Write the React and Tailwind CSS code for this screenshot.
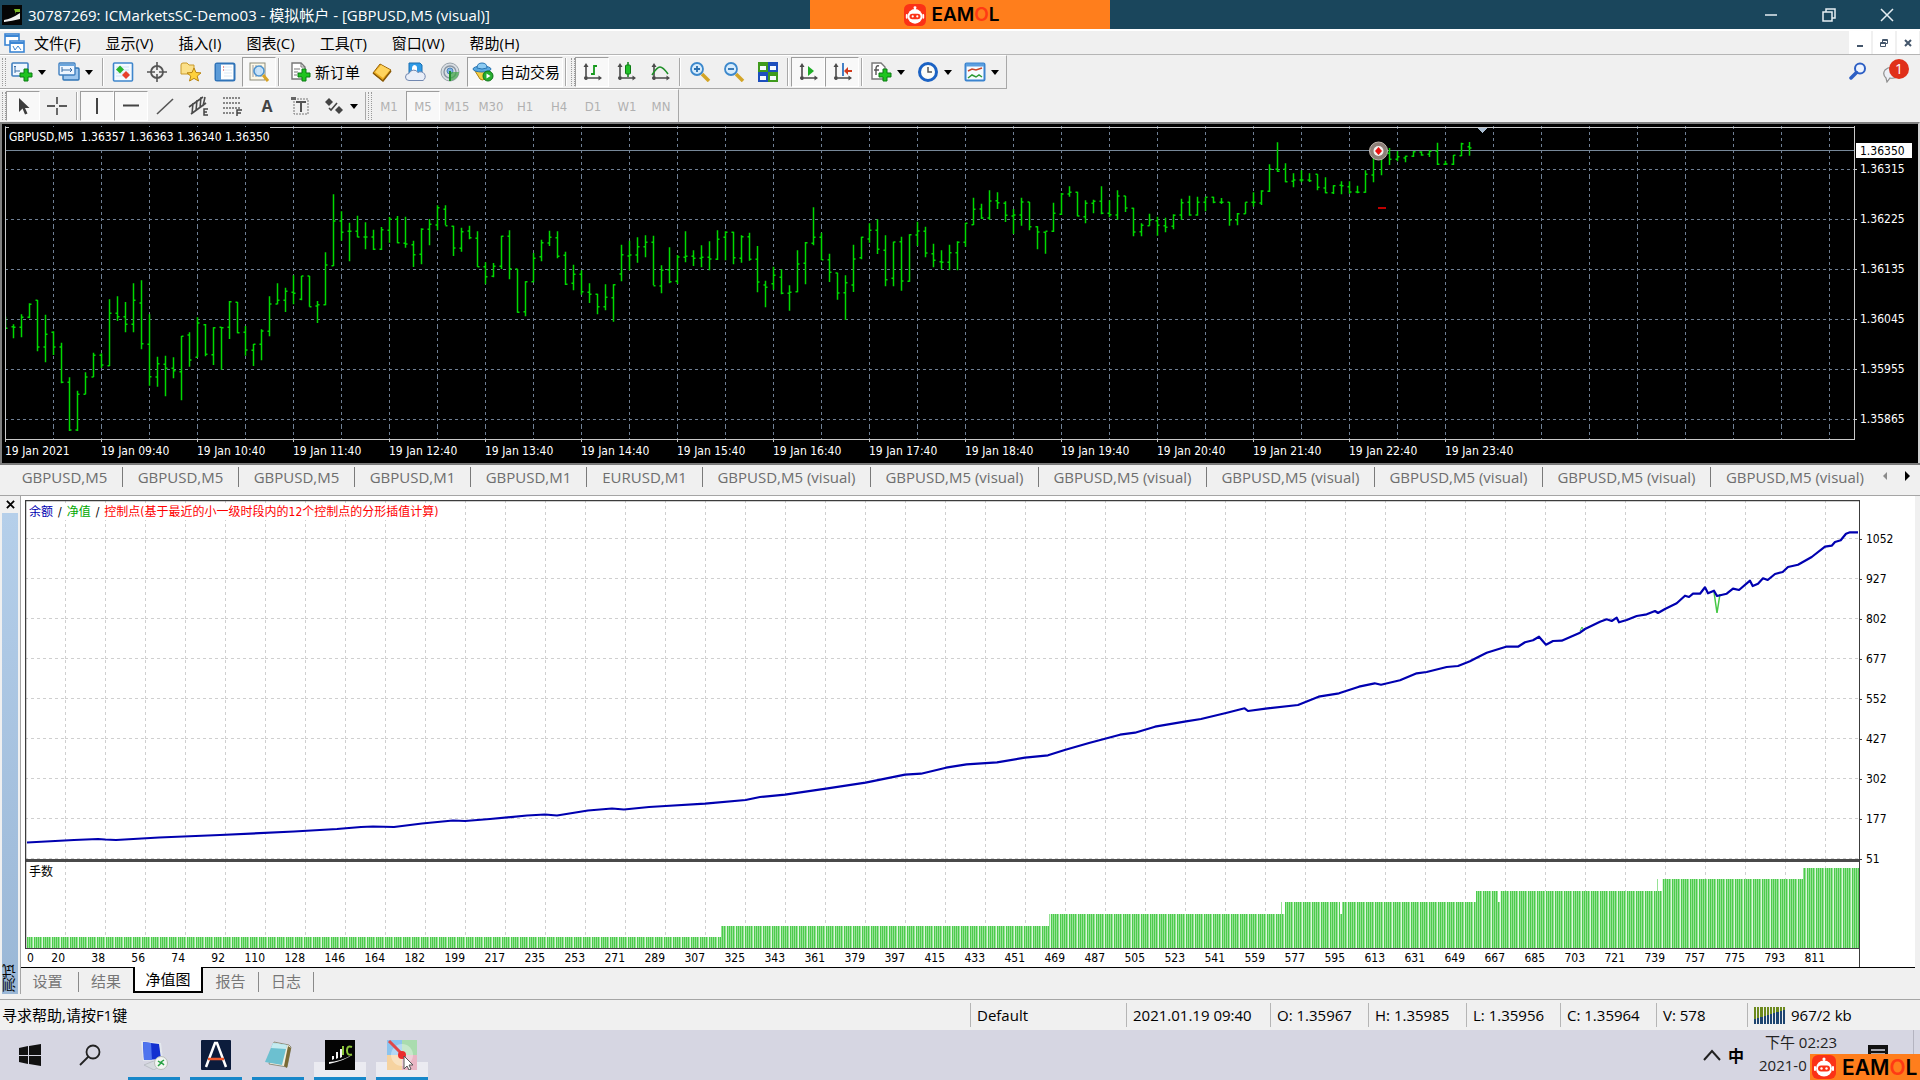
import clsx from 'clsx';

// [high, low, open, close] measured downwards in thirds of a pixel
const bars = [
  [590, 627, 605, 625], [613, 655, 620, 622], [583, 652, 622, 592], [550, 595, 592, 553], [540, 694, 541, 681],
  [584, 727, 681, 643], [634, 705, 637, 681], [668, 790, 681, 787], [772, 933, 787, 930], [812, 933, 930, 823],
  [757, 823, 823, 771], [698, 771, 771, 706], [700, 744, 706, 735], [538, 738, 737, 580], [529, 603, 580, 590],
  [546, 637, 590, 613], [490, 637, 613, 541], [481, 688, 549, 671], [583, 797, 673, 770], [710, 800, 771, 731],
  [707, 829, 733, 745], [712, 775, 745, 752], [648, 841, 755, 649], [637, 740, 645, 720], [592, 712, 712, 609],
  [612, 709, 614, 703], [622, 735, 704, 623], [622, 749, 622, 623], [543, 657, 622, 545], [546, 640, 547, 638],
  [618, 707, 637, 690], [672, 738, 691, 673], [628, 721, 673, 633], [529, 649, 634, 552], [490, 553, 552, 541],
  [503, 576, 541, 514], [466, 553, 517, 520], [468, 541, 538, 468], [468, 560, 468, 560], [543, 609, 558, 554],
  [397, 556, 554, 435], [223, 438, 437, 303], [274, 362, 303, 337], [308, 424, 334, 334], [287, 352, 334, 351],
  [307, 388, 351, 351], [329, 390, 351, 388], [321, 390, 388, 329], [291, 368, 331, 298], [288, 370, 298, 368],
  [290, 383, 370, 372], [362, 441, 374, 404], [325, 433, 403, 328], [297, 376, 328, 313], [256, 331, 315, 263],
  [256, 316, 268, 317], [317, 408, 319, 384], [323, 395, 385, 335], [317, 358, 333, 353], [334, 440, 355, 440],
  [427, 493, 440, 470], [429, 472, 469, 439], [347, 447, 439, 349], [331, 478, 349, 446], [447, 578, 447, 577],
  [484, 589, 575, 485], [399, 487, 485, 415], [359, 424, 410, 368], [332, 378, 369, 352], [334, 415, 353, 409],
  [395, 495, 406, 493], [434, 511, 490, 463], [451, 524, 463, 515], [490, 549, 517, 523], [521, 583, 523, 560],
  [493, 571, 560, 532], [493, 605, 533, 494], [374, 484, 462, 404], [362, 451, 408, 405], [352, 428, 405, 380],
  [346, 412, 380, 367], [347, 496, 367, 497], [436, 520, 498, 451], [382, 490, 449, 485], [405, 492, 484, 411],
  [334, 427, 412, 409], [391, 438, 409, 415], [376, 442, 415, 412], [364, 451, 412, 417], [331, 420, 418, 358],
  [334, 421, 352, 337], [335, 433, 337, 413], [346, 428, 415, 350], [338, 422, 350, 418], [378, 517, 418, 486],
  [482, 562, 495, 502], [440, 509, 491, 466], [448, 523, 472, 520], [496, 572, 520, 517], [391, 517, 515, 432],
  [366, 493, 430, 368], [262, 376, 370, 352], [338, 420, 352, 419], [401, 486, 419, 457], [458, 539, 459, 519],
  [466, 600, 518, 488], [374, 516, 495, 417], [350, 418, 413, 352], [310, 368, 357, 331], [298, 402, 331, 388],
  [346, 499, 391, 479], [365, 499, 475, 366], [350, 512, 365, 483], [343, 485, 484, 344], [305, 378, 345, 333],
  [320, 412, 334, 399], [371, 442, 401, 421], [391, 448, 425, 427], [374, 451, 427, 398], [364, 451, 398, 367],
  [308, 380, 367, 310], [233, 315, 314, 268], [251, 297, 267, 294], [211, 299, 294, 243], [217, 267, 242, 248],
  [244, 306, 250, 286], [267, 342, 288, 285], [233, 317, 285, 246], [246, 331, 246, 320], [319, 388, 320, 336],
  [335, 401, 337, 334], [248, 336, 334, 280], [219, 285, 283, 222], [199, 230, 222, 217], [215, 289, 217, 288],
  [241, 310, 290, 250], [239, 280, 250, 244], [199, 283, 244, 280], [241, 292, 280, 284], [211, 299, 285, 228],
  [228, 276, 228, 264], [263, 349, 265, 336], [310, 349, 335, 316], [281, 317, 317, 300], [290, 347, 302, 316],
  [293, 337, 317, 322], [283, 328, 319, 286], [236, 299, 285, 248], [227, 287, 247, 285], [230, 287, 285, 247],
  [232, 274, 247, 232], [230, 250, 232, 247], [234, 252, 247, 247], [246, 317, 247, 300], [279, 316, 300, 281],
  [247, 281, 281, 247], [217, 260, 247, 247], [211, 255, 249, 213], [133, 216, 214, 148], [67, 156, 148, 154],
  [130, 187, 148, 185], [160, 202, 184, 180], [151, 187, 180, 180], [160, 186, 180, 182], [163, 211, 163, 202],
  [172, 220, 204, 218], [196, 222, 218, 197], [184, 223, 196, 197], [184, 221, 200, 216], [197, 220, 216, 217],
  [151, 218, 217, 163], [95, 187, 165, 100], [92, 166, 100, 112], [84, 135, 100, 118], [93, 124, 118, 110],
  [107, 127, 114, 109], [94, 111, 109, 95], [94, 107, 96, 105], [91, 111, 103, 94], [68, 135, 94, 133],
  [122, 135, 133, 132], [105, 135, 133, 106], [68, 108, 107, 71], [66, 107, 80, 84],
];

const barPath = bars
  .map(([high, low, open, close], i) => {
    const x = 0.5 + i * 8;
    const y = (v) => (v / 3 - 6).toFixed(1);
    return `M${x} ${y(high)}V${y(low)}M${x - 2} ${y(open)}h2M${x} ${y(close)}h2`;
  })
  .join('');

const equityLine =
  '2,342.5 49,340 73,339 80,339.5 91,340 134,337.5 195,335 269,331.5 312,329 336,327 348,326.5 369,327 397,323.5 428,320.5 440,321 465,319 502,315.5 520,314.5 532,315.5 563,310.5 587,308.5 599,309.5 624,307 ' +
  '640.5,306 680,303.7 720.6,300 735,297 760,294.7 801,288.7 840.5,282.7 880,274.7 896,273.7 921,267.7 941.5,264.3 972,262.3 1000,257.7 1023,255.3 1040.5,249.7 1064,243 1095,234.7 1110,232.7 1130,226.7 1161,221.3 1176,219 1202,212.7 1219.6,208.3 1223,211 1242.5,208.3 1273,205 1293.6,196.7 1314,193.3 1334,186.7 1349.7,183.3 1356,184.7 1375,180.3 1391.7,173.3 1401.7,172 1421.7,167 1433,166 1445,161.3 1451.7,157.7 1461.7,152.7 1481,146.7 1493,146.7 1500,142.3 1508,140.3 1514,136.7 1521,144.7 1528,141 1536.7,140.7 1555,132.7 1560,129 1575,121.7 1581.7,119.3 1586.7,121 1591.7,117.7 1594,122.3 1601.7,120 1611.7,116 1621.7,114.3 1630,111 1633,113 1640,109 1651.7,103.3 1660,95.7 1664,97 1668,93.7 1675,93.7 1680,87.3 1683,93.3 1689,90.7 1692,96 1701.7,93.7 1708,88.7 1714,90 1725,80.7 1727.7,86 1733,83.7 1738,78.3 1742.7,80 1750,74 1757.7,72 1763,67 1773,64.7 1786.7,57 1800,46.7 1806.7,45.7 1810,42 1815.7,40.3 1821,33.7 1825,32.3 1833,32.3';

// [left, right, top] of each run of equal lot sizes
const lots = [
  [2, 696, 437], [696, 1024, 426], [1024, 1256, 414], [1256, 1257, 402], [1257, 1260, 414], [1260, 1315, 402],
  [1315, 1317, 414], [1317, 1451, 402], [1451, 1473, 391], [1473, 1475, 402], [1475, 1632, 391], [1632, 1633, 379],
  [1633, 1637, 391], [1637, 1778, 379], [1778, 1834, 368],
];

const prices = ['1.36315', '1.36225', '1.36135', '1.36045', '1.35955', '1.35865'];
const times = ['19 Jan 2021', ...['09', '10', '11', '12', '13', '14', '15', '16', '17', '18', '19', '20', '21', '22', '23'].map((h) => `19 Jan ${h}:40`)];
const balances = [1052, 927, 802, 677, 552, 427, 302, 177, 51];
const trades = [
  20, 38, 56, 74, 92, 110, 128, 146, 164, 182, 199, 217, 235, 253, 271, 289, 307, 325, 343, 361, 379, 397, 415, 433,
  451, 469, 487, 505, 523, 541, 559, 577, 595, 613, 631, 649, 667, 685, 703, 721, 739, 757, 775, 793, 811,
];
const chartTabs = [
  'GBPUSD,M5', 'GBPUSD,M5', 'GBPUSD,M5', 'GBPUSD,M1', 'GBPUSD,M1', 'EURUSD,M1',
  ...Array(7).fill('GBPUSD,M5 (visual)'),
];
const menus = ['文件(F)', '显示(V)', '插入(I)', '图表(C)', '工具(T)', '窗口(W)', '帮助(H)'];
const periods = ['M1', 'M5', 'M15', 'M30', 'H1', 'H4', 'D1', 'W1', 'MN'];

function Icon({ children }) {
  return (
    <svg viewBox="0 0 22 20" className="block h-5 w-[22px] shrink-0" fill="none" aria-hidden="true">
      {children}
    </svg>
  );
}

const axes = (
  <>
    <path d="M5 3v15M3 16h16" stroke="#4a4a4a" strokeWidth="1.600" />
    <path d="M2.500 5L5 1l2.500 4zM17.500 13.500l3.500 2.500-3.500 2.500zM3.500 14.500h3v3h-3z" fill="#4a4a4a" />
  </>
);
const plus = <path d="M13 7h4v4h4v4h-4v4h-4v-4H9v-4h4z" fill="#1fc41f" stroke="#0b7a12" />;

const icons = {
  newChart: (
    <Icon>
      <rect x="1" y="1" width="16" height="13" rx="1" fill="#eef6ff" stroke="#3f7fbf" strokeWidth="1.600" />
      <path d="M4 4v7M4 9h5M3 5l1-1 1 1" stroke="#3a6ea5" />
      {plus}
    </Icon>
  ),
  profiles: (
    <Icon>
      <rect x="5" y="6" width="16" height="12" rx="1" fill="#9cc6ee" stroke="#2f74b5" strokeWidth="1.400" />
      <rect x="1" y="1" width="16" height="12" rx="1" fill="#eef6ff" stroke="#3f7fbf" strokeWidth="1.400" />
      <path d="M1 3h16" stroke="#6aa5dc" strokeWidth="2" />
      <path d="M4 5v5M4 8h10M12 6l2 2-2 2" stroke="#3a6ea5" />
    </Icon>
  ),
  market: (
    <Icon>
      <rect x="1.500" y="1" width="19" height="18" rx="1" fill="#f4faff" stroke="#3f86cc" strokeWidth="1.600" />
      <path d="M4 5h13M4 8h13M4 11h13M4 14h13" stroke="#cfe2f5" />
      <path d="M8 3.500l4 4-4 4-4-4z" fill="#28b52c" />
      <path d="M14 9l4 4-4 4-4-4z" fill="#e8402a" />
    </Icon>
  ),
  target: (
    <Icon>
      <circle cx="11" cy="10" r="6" stroke="#555" strokeWidth="1.800" />
      <path d="M11 0v8M11 12v8M1 10h8M13 10h8" stroke="#555" strokeWidth="1.600" />
    </Icon>
  ),
  favorites: (
    <Icon>
      <path d="M1 3q0-2 2-2h4l2 2h5v9H1z" fill="#fbe08a" stroke="#c99a2c" />
      <path d="M14 6l2 4.500 5 .4-3.800 3.200L18.500 19 14 16.400 9.500 19l1.300-4.900L7 10.900l5-.4z" fill="#ffd23c" stroke="#b98511" />
    </Icon>
  ),
  navigator: (
    <Icon>
      <rect x="1.500" y="1.500" width="19" height="17" rx="1.500" fill="#fff" stroke="#2f73b8" strokeWidth="2" />
      <path d="M2 2h5v16H2z" fill="#5b9bd8" />
      <path d="M9 5h1M9 8h1" stroke="#d33" />
      <path d="M10 5h8M10 8h8M10 11h8M10 14h8" stroke="#dce9f5" />
    </Icon>
  ),
  tester: (
    <Icon>
      <rect x="2" y="1" width="15" height="17" fill="#fdf8e6" stroke="#8b8b7a" />
      <path d="M5 3v12M8 3v12M13 3v12" stroke="#bbb" strokeWidth="1.500" />
      <circle cx="11" cy="9" r="5" fill="#bfe0fb" fillOpacity=".85" stroke="#4b92cf" strokeWidth="1.600" />
      <path d="M15 13l5 6" stroke="#d7a326" strokeWidth="3" />
    </Icon>
  ),
  newOrder: (
    <Icon>
      <path d="M3 1h9l4 4v12H3z" fill="#fff" stroke="#777" strokeWidth="1.400" />
      <path d="M12 1v4h4M5 7h6M5 10h4M5 13h3" stroke="#777" />
      {plus}
    </Icon>
  ),
  book: (
    <Icon>
      <path d="M2 11L9 2l11 6-8 11z" fill="#e9a91e" stroke="#9a6508" />
      <path d="M4 10l6-7 9 5-7 8z" fill="#ffd45e" />
      <path d="M2 11l10 8 8-10" stroke="#8a5a06" strokeWidth="1.500" />
    </Icon>
  ),
  cloud: (
    <Icon>
      <path d="M4 1h11l2 2v8H4z" fill="#2f9be6" stroke="#1b6fb0" />
      <path d="M9 3a3 3 0 0 1 3 3v3H7V6q0-2 2-3z" fill="#fff" />
      <path d="M4 18.500a3.500 3.500 0 0 1 0-7 5 5 0 0 1 9-1 4 4 0 0 1 5 8z" fill="#e9eef8" stroke="#7288b0" />
    </Icon>
  ),
  signal: (
    <Icon>
      <circle cx="11" cy="10" r="9" fill="#d8dde2" stroke="#9aa3ab" />
      <circle cx="11" cy="10" r="6" stroke="#8a96a3" strokeWidth="1.400" />
      <circle cx="11" cy="9" r="3" fill="#7fb3e4" stroke="#4c83b8" />
      <path d="M11 10v9q8-1 9-9z" fill="#3fa545" fillOpacity=".7" />
      <path d="M11 9v10" stroke="#1f8f2a" strokeWidth="2" />
    </Icon>
  ),
  auto: (
    <Icon>
      <path d="M3 9h14l-4 8q-3 2-5 0z" fill="#f6cf45" stroke="#ad8110" />
      <ellipse cx="10" cy="7" rx="9" ry="3" fill="#5aa9e0" stroke="#2a76b3" />
      <path d="M5 6q0-5 5-5t5 5q-5 2-10 0z" fill="#8ccbf2" stroke="#2a76b3" />
      <circle cx="16" cy="14" r="5" fill="#27ad2f" stroke="#0e7416" />
      <path d="M14.500 11.500v5l4-2.500z" fill="#fff" />
    </Icon>
  ),
  barChart: <Icon>{axes}<path d="M13 3v10M10 12h3M13 4h3" stroke="#169a1d" strokeWidth="1.800" /></Icon>,
  candles: (
    <Icon>
      {axes}
      <path d="M13 0v15" stroke="#0d7c14" strokeWidth="1.500" />
      <rect x="10.500" y="3" width="5" height="9" rx="1" fill="#22c02a" stroke="#0d7c14" />
    </Icon>
  ),
  lineChart: <Icon>{axes}<path d="M3 13q5-8 8-8t8 7" stroke="#1f9028" strokeWidth="1.600" /></Icon>,
  zoomIn: (
    <Icon>
      <path d="M13 12l7 7" stroke="#d3a528" strokeWidth="3.500" />
      <circle cx="8" cy="7" r="6" fill="#d7ecfc" stroke="#3c88cc" strokeWidth="1.800" />
      <path d="M8 4v6M5 7h6" stroke="#2a6fb0" strokeWidth="1.800" />
    </Icon>
  ),
  zoomOut: (
    <Icon>
      <path d="M13 12l7 7" stroke="#d3a528" strokeWidth="3.500" />
      <circle cx="8" cy="7" r="6" fill="#d7ecfc" stroke="#3c88cc" strokeWidth="1.800" />
      <path d="M5 7h6" stroke="#2a6fb0" strokeWidth="1.800" />
    </Icon>
  ),
  tile: (
    <Icon>
      <path d="M1 0h10v10H1zM11 10h10v10H11z" fill="#3f9a1c" />
      <path d="M11 0h10v10H11zM1 10h10v10H1z" fill="#1d4fbd" />
      <path d="M3 4h6v4H3zM13 4h6v4h-6zM3 14h6v4H3zM13 14h6v4h-6z" fill="#f4faff" />
    </Icon>
  ),
  scroll: <Icon>{axes}<path d="M11 4v10l6-5z" fill="#1fae27" /></Icon>,
  shift: (
    <Icon>
      {axes}
      <path d="M12 1v13" stroke="#2f73c0" strokeWidth="1.800" />
      <path d="M13 9l4-4v3h4v2h-4v3z" fill="#d33a1c" />
    </Icon>
  ),
  indicators: (
    <Icon>
      <path d="M2 1h9l4 4v12H2z" fill="#fff" stroke="#777" strokeWidth="1.400" />
      <path d="M9 4q-3-1-3 3v6M4 8h5" stroke="#555" strokeWidth="1.400" />
      {plus}
    </Icon>
  ),
  clock: (
    <Icon>
      <circle cx="11" cy="10" r="8.500" fill="#fdfdf8" stroke="#1c63c4" strokeWidth="3" />
      <path d="M11 5v5h4" stroke="#555" strokeWidth="1.500" />
    </Icon>
  ),
  template: (
    <Icon>
      <rect x="1.500" y="1.500" width="19" height="17" rx="1" fill="#f6fbff" stroke="#3b84cf" strokeWidth="2" />
      <path d="M2 3h18" stroke="#5b9fe0" strokeWidth="3" />
      <path d="M4 9l4-2 4 1 6-2" stroke="#c9452a" strokeWidth="1.500" />
      <path d="M4 16l4-3 4 2 3-2 3 2" stroke="#2e9a35" strokeWidth="1.500" />
    </Icon>
  ),
  cursor: <Icon><path d="M7 2v14l3.500-3.500 2.500 6 2.500-1-2.500-5.500h4.500z" fill="#3c3c3c" /></Icon>,
  cross: <Icon><path d="M11 1v7M11 12v7M1 10h8M13 10h8" stroke="#5a5a5a" strokeWidth="1.800" /></Icon>,
  vline: <Icon><path d="M11 2v16" stroke="#444" strokeWidth="2" /></Icon>,
  hline: <Icon><path d="M3 9.500h16" stroke="#444" strokeWidth="2" /></Icon>,
  trend: <Icon><path d="M3 18L19 3" stroke="#555" strokeWidth="1.600" /></Icon>,
  channel: (
    <Icon>
      <path d="M1 11L15 1M3 18L18 7M5 7l-1 11M9 4l-1 11M13 1l-1 11M17 1l-2 9" stroke="#4a4a4a" strokeWidth="1.600" />
      <path d="M20 13h-4v6h4M16 16h3" stroke="#444" strokeWidth="1.500" />
    </Icon>
  ),
  fibo: (
    <Icon>
      <path d="M1 2h18M1 7h18M1 12h18M1 17h12" stroke="#666" strokeWidth="1.400" strokeDasharray="2 1" />
      <path d="M15 20v-6h5M15 17h4" stroke="#444" strokeWidth="1.500" />
    </Icon>
  ),
  label: (
    <Icon>
      <path d="M4 3h14v15H4z" stroke="#777" strokeDasharray="2 1" />
      <path d="M6 6h10M11 6v10" stroke="#555" strokeWidth="2" />
      <path d="M1 1h5v3H1z" fill="#666" />
    </Icon>
  ),
  arrows: (
    <Icon>
      <path d="M6 2l4 4-4 4-4-4zM16 10l4 4-4 4-4-4z" fill="#444" />
      <path d="M6 12l2 2 6-7" stroke="#444" strokeWidth="1.600" />
    </Icon>
  ),
};

function Caret() {
  return <span className="h-0 w-0 border-x-4 border-t-[5px] border-x-transparent border-t-black" />;
}

function Grip() {
  return <span className="ml-[2px] h-7 w-1 shrink-0 self-center border-x border-dotted border-[#9a9a9a]" />;
}

function Rule() {
  return <span className="mx-[2px] h-7 w-[2px] shrink-0 self-center border-l border-[#a8a8a8] bg-white" />;
}

function Tool({ label, icon, pressed, drop, children }) {
  return (
    <button
      type="button"
      aria-label={label}
      aria-pressed={pressed}
      className={clsx(
        'flex shrink-0 items-center border',
        drop ? 'w-[47px] gap-[5px] pl-1' : 'w-[34px] justify-center',
        pressed ? 'border-b-white border-l-[#9d9d9d] border-r-white border-t-[#9d9d9d] bg-[#f8f8f8]' : 'border-transparent',
      )}
    >
      {icon ? icons[icon] : children}
      {drop && <Caret />}
    </button>
  );
}

function RobotMark({ className }) {
  return (
    <svg viewBox="0 0 24 24" className={clsx('shrink-0', className)} aria-hidden="true">
      <rect width="24" height="24" rx="6" fill="#fb3216" />
      <circle cx="12" cy="4" r="1.600" fill="#fff" />
      <path d="M12 4v4" stroke="#fff" strokeWidth="1.500" />
      <circle cx="12" cy="13.500" r="8" fill="#fff" />
      <path d="M3 12v3M21 12v3" stroke="#fff" strokeWidth="2" strokeLinecap="round" />
      <rect x="6" y="10.500" width="12" height="6" rx="3" fill="#fb3216" />
      <circle cx="9.500" cy="13.500" r="1.200" fill="#fff" />
      <circle cx="14.500" cy="13.500" r="1.200" fill="#fff" />
    </svg>
  );
}

function Brand({ large }) {
  return (
    <span className={clsx("flex items-center font-['Inter',sans-serif] font-semibold leading-none text-black", large ? 'gap-[6px] text-[21px]' : 'gap-[5px] text-[19px]')}>
      <RobotMark className={large ? 'h-6 w-6' : 'h-[22px] w-[22px]'} />
      <span>
        EAM<span className="text-[#ff3a14]">O</span>L
      </span>
    </span>
  );
}

function TitleBar() {
  return (
    <header className="relative flex h-[29px] items-center bg-[#1a465c] text-[15px] text-white">
      <svg viewBox="0 0 20 20" className="ml-[2px] h-5 w-5 shrink-0" aria-hidden="true">
        <rect width="20" height="20" fill="#050505" />
        <path d="M2 15q7-1 16-7v6q-8 2-16 3z" fill="#eee" />
        <path d="M12 4h6v3h-4v2" fill="#7cb928" />
      </svg>
      <h1 className="ml-[6px] flex-1 whitespace-nowrap leading-7">30787269: ICMarketsSC-Demo03 - 模拟帐户 - [GBPUSD,M5 (visual)]</h1>
      <div className="absolute left-1/2 top-0 flex h-full w-[300px] -translate-x-1/2 items-center justify-center bg-[#ff7e1c] pr-4">
        <Brand />
      </div>
      <button type="button" aria-label="最小化" className="flex w-[58px] items-center justify-center">
        <svg viewBox="0 0 14 14" className="h-[14px] w-[14px]"><path d="M1 7h12" stroke="#e6eef2" strokeWidth="1.500" /></svg>
      </button>
      <button type="button" aria-label="还原" className="flex w-[58px] items-center justify-center">
        <svg viewBox="0 0 14 14" className="h-[14px] w-[14px]" fill="none" stroke="#e6eef2" strokeWidth="1.500"><path d="M1 4h9v9H1zM4 4V1h9v9h-3" /></svg>
      </button>
      <button type="button" aria-label="关闭" className="mr-1 flex w-[58px] items-center justify-center">
        <svg viewBox="0 0 14 14" className="h-[14px] w-[14px]"><path d="M1 1l12 12M13 1L1 13" stroke="#e6eef2" strokeWidth="1.500" /></svg>
      </button>
    </header>
  );
}

function MenuBar() {
  return (
    <nav className="flex h-[26px] items-center border-b border-[#b5b5b5] border-t-2 border-t-white text-[15px] leading-5">
      <svg viewBox="0 0 22 20" className="ml-1 h-5 w-[22px]" fill="none" aria-hidden="true">
        <rect x="1" y="1" width="14" height="11" fill="#fff" stroke="#3c86d4" strokeWidth="1.600" />
        <path d="M1 3h14" stroke="#3c86d4" strokeWidth="2" />
        <rect x="6" y="8" width="14" height="11" fill="#fff" stroke="#3c86d4" strokeWidth="1.600" />
        <path d="M6 10h14" stroke="#3c86d4" strokeWidth="2" />
        <path d="M9 13l2 4 3-4 3 4" stroke="#3c86d4" />
      </svg>
      <div className="-ml-1 flex flex-1 gap-px">
        {menus.map((menu) => (
          <button key={menu} type="button" className="px-3">{menu}</button>
        ))}
      </div>
      <div className="flex gap-[2px] self-stretch pr-px text-[#44566b]">
        <button type="button" aria-label="最小化图表" className="flex w-[22px] items-center justify-center bg-white">
          <svg viewBox="0 0 10 10" className="h-[10px] w-[10px]"><path d="M2 8h6" stroke="currentColor" strokeWidth="2" /></svg>
        </button>
        <button type="button" aria-label="还原图表" className="flex w-[22px] items-center justify-center bg-white">
          <svg viewBox="0 0 10 10" className="h-[10px] w-[10px]" fill="none" stroke="currentColor"><path d="M1.500 4.500h5v4h-5zM3.500 4V1.500h5v4H7M1.500 5.500h5M3.500 2.500h5" /></svg>
        </button>
        <button type="button" aria-label="关闭图表" className="flex w-[22px] items-center justify-center bg-white">
          <svg viewBox="0 0 10 10" className="h-[10px] w-[10px]"><path d="M2 2l6 6M8 2L2 8" stroke="currentColor" strokeWidth="2" /></svg>
        </button>
      </div>
    </nav>
  );
}

function Toolbars() {
  return (
    <div className="relative text-[15px] leading-none">
      <div className="flex h-[34px] w-max items-stretch border-b border-r border-[#a8a8a8] border-t border-t-white py-px">
        <Grip />
        <Tool label="新图表" icon="newChart" drop />
        <Tool label="配置文件" icon="profiles" drop />
        <Rule />
        <Tool label="市场报价" icon="market" />
        <Tool label="数据窗口" icon="target" />
        <Tool label="收藏夹" icon="favorites" />
        <Tool label="导航" icon="navigator" />
        <Tool label="测试" icon="tester" pressed />
        <Rule />
        <button type="button" className="flex w-[83px] items-center gap-1 pl-[7px]">{icons.newOrder}新订单</button>
        <Tool label="编辑器" icon="book" />
        <Tool label="云" icon="cloud" />
        <Tool label="信号" icon="signal" />
        <button type="button" aria-pressed="true" className="flex w-24 items-center gap-[6px] border border-b-white border-l-[#9d9d9d] border-r-white border-t-[#9d9d9d] bg-[#f8f8f8] pl-1">
          {icons.auto}自动交易
        </button>
        <Rule />
        <Grip />
        <Tool label="柱状图" icon="barChart" pressed />
        <Tool label="阴阳烛" icon="candles" />
        <Tool label="折线图" icon="lineChart" />
        <Rule />
        <Tool label="放大" icon="zoomIn" />
        <Tool label="缩小" icon="zoomOut" />
        <Tool label="平铺窗口" icon="tile" />
        <Rule />
        <Tool label="自动滚动" icon="scroll" pressed />
        <Tool label="图表平移" icon="shift" pressed />
        <Rule />
        <Tool label="指标" icon="indicators" drop />
        <Tool label="周期" icon="clock" drop />
        <Tool label="模板" icon="template" drop />
      </div>
      <div className="flex h-[33px] w-max items-stretch border-r border-[#a8a8a8] border-t border-t-white py-px">
        <Grip />
        <Tool label="光标" icon="cursor" pressed />
        <Tool label="十字准线" icon="cross" />
        <Rule />
        <Tool label="垂直线" icon="vline" pressed />
        <Tool label="水平线" icon="hline" pressed />
        <Tool label="趋势线" icon="trend" />
        <Tool label="通道" icon="channel" />
        <Tool label="斐波那契" icon="fibo" />
        <Tool label="文字"><span className="text-base font-bold text-[#444]">A</span></Tool>
        <Tool label="文字标签" icon="label" />
        <Tool label="箭头" icon="arrows" drop />
        <span className="h-7 self-center border-l border-[#a8a8a8]" />
        <Grip />
        {periods.map((period) => (
          <Tool key={period} label={period} pressed={period === 'M5'}>
            <span className="font-['DejaVu_Sans_Condensed','DejaVu_Sans',sans-serif] text-[13px] text-[#b0b0b0]">{period}</span>
          </Tool>
        ))}
      </div>
      <div className="absolute right-[11px] top-1 flex items-start gap-[14px]">
        <button type="button" aria-label="搜索">
          <svg viewBox="0 0 18 18" className="mt-[3px] h-[18px] w-[18px]" fill="none">
            <circle cx="11" cy="6.500" r="5" fill="#eef4ff" stroke="#2d5fc4" strokeWidth="2" />
            <path d="M7.500 10.500L2 16" stroke="#2d5fc4" strokeWidth="3.500" strokeLinecap="round" />
          </svg>
        </button>
        <button type="button" aria-label="消息" className="relative h-6 w-7">
          <svg viewBox="0 0 28 24" className="h-6 w-7" fill="none">
            <path d="M6 23l-1-4q-4-4-1-8 4-4 10-2 6 3 3 8-3 3-8 2z" fill="#eceff5" stroke="#8f8f8f" strokeWidth="1.200" />
          </svg>
          <span className="absolute right-0 top-0 flex h-5 w-5 items-center justify-center rounded-full bg-[#e0301a] text-sm text-white">1</span>
        </button>
      </div>
    </div>
  );
}

function PriceChart() {
  return (
    <section className="border-l-2 border-r-2 border-t-2 border-[#808080] border-r-[#d0d0d0] bg-black pl-[3px] pt-[2px] font-['DejaVu_Sans_Condensed','DejaVu_Sans',sans-serif] text-xs leading-none text-white">
      <div className="flex h-[314px]">
        <div className="relative min-w-0 flex-1">
          <svg className="block h-full w-full" shapeRendering="crispEdges">
            <defs>
              <pattern id="price-grid" width="48" height="50" patternUnits="userSpaceOnUse">
                <path d="M.5 0v50" stroke="#6f7f94" strokeDasharray="3 3" />
                <path d="M0 43.500h48" stroke="#6f7f94" strokeDasharray="3 3" />
              </pattern>
            </defs>
            <rect width="100%" height="100%" fill="url(#price-grid)" />
            <path d="M0 24.500h4000" stroke="#778899" />
            <path d={barPath} stroke="#00d800" strokeWidth="1.500" fill="none" shapeRendering="auto" />
            <path d="M1471 1h12l-6 6z" fill="#a9bccf" />
            <path d="M1373 81.500h8" stroke="#c00000" strokeWidth="2" />
            <g shapeRendering="auto">
              <circle cx="1373.500" cy="25" r="9" fill="#8d8078" stroke="#c2b8b0" />
              <circle cx="1373.500" cy="25" r="5" fill="#f5f2ef" />
              <path d="M1373.500 21l3.500 4-3.500 4-3.500-4z" fill="#e81010" />
            </g>
            <rect x=".5" y="1" width="100%" height="312" fill="none" stroke="#c8c8c8" />
          </svg>
          <p className="absolute left-1 top-px whitespace-pre bg-black py-1">GBPUSD,M5  1.36357 1.36363 1.36340 1.36350</p>
        </div>
        <div className="relative w-16 border-l border-[#c8c8c8] pt-[18px]">
          {prices.map((price) => (
            <div key={price} className="flex h-[50px] items-center gap-[3px]">
              <span className="h-px w-[2px] bg-[#c8c8c8]" />
              {price}
            </div>
          ))}
          <span className="absolute left-px top-[17px] flex h-[15px] w-14 items-center bg-white pl-1 text-black">1.36350</span>
        </div>
      </div>
      <div className="flex h-[23px] overflow-hidden">
        {times.map((time) => (
          <span key={time} className="h-full w-24 shrink-0">
            <span className="mb-[3px] block h-[2px] w-px bg-[#c8c8c8]" />
            {time}
          </span>
        ))}
      </div>
    </section>
  );
}

function ChartTabs() {
  return (
    <div className="flex h-[33px] items-start border-b border-t-2 border-b-[#a5a5a5] border-t-[#7b7b7b] pt-[2px] text-[15px] leading-none text-[#6e6e6e]">
      <div className="flex min-w-0 flex-1 overflow-hidden pl-[7px]" role="tablist">
        {chartTabs.map((tab, i) => (
          <button
            key={i}
            type="button"
            role="tab"
            className={clsx(
              'h-5 shrink-0 whitespace-nowrap',
              i < 6 ? 'w-[116px]' : 'w-[168px]',
              i < 12 && 'border-r border-[#7a7a7a]',
            )}
          >
            {tab}
          </button>
        ))}
      </div>
      <div className="flex h-[18px] items-center gap-[18px] pr-[10px]">
        <button type="button" aria-label="向左" className="h-0 w-0 border-y-4 border-r-4 border-y-transparent border-r-[#8a8a8a]" />
        <button type="button" aria-label="向右" className="h-0 w-0 border-y-[5px] border-l-[5px] border-y-transparent border-l-black" />
      </div>
    </div>
  );
}

function EquityChart() {
  return (
    <div className="flex bg-white pl-1 pt-1 font-['DejaVu_Sans_Condensed','DejaVu_Sans','Noto_Sans_CJK_SC',sans-serif] text-xs leading-none">
      <div className="min-w-0 flex-1">
        <div className="relative h-[449px]">
          <svg className="block h-full w-full">
            <defs>
              <pattern id="equity-grid" width="40" height="40" patternUnits="userSpaceOnUse">
                <path d="M.5 0v40" stroke="#cfcfcf" strokeDasharray="3 3" />
                <path d="M0 38.500h40" stroke="#cfcfcf" strokeDasharray="3 3" />
              </pattern>
              <pattern id="lot-grid" width="40" height="6" patternUnits="userSpaceOnUse">
                <path d="M.5 0v3" stroke="#cfcfcf" />
              </pattern>
              <pattern id="lot-bars" width="9" height="10" patternUnits="userSpaceOnUse">
                <rect width="9" height="10" fill="#96e296" />
                <path d="M.5 0v10M2.500 0v10M4.500 0v10M6.500 0v10" stroke="#4ccb4c" />
                <path d="M8.500 0v10" stroke="#dcf6dc" />
              </pattern>
            </defs>
            <g shapeRendering="crispEdges">
              <rect width="100%" height="359" fill="url(#equity-grid)" />
              <rect y="361" width="100%" height="88" fill="url(#lot-grid)" />
              {lots.map(([left, right, top]) => (
                <rect key={left} x={left} y={top} width={right - left} height={448 - top} fill="url(#lot-bars)" />
              ))}
            </g>
            <path d="M1689 92l3 21 3-19" stroke="#46c846" strokeWidth="1.500" fill="none" />
            <path d="M1555 131l2-4 2 4" stroke="#46c846" fill="none" />
            <polyline points={equityLine} fill="none" stroke="#0000b0" strokeWidth="2.200" strokeLinejoin="round" />
            <path d="M0 360.500h4000" stroke="#4a4a4a" strokeWidth="3" />
            <path d="M0 448.500h4000" stroke="#4a3c4a" />
            <path d="M.5 449V.5h4000" stroke="#3c3c3c" strokeWidth="1.500" fill="none" />
          </svg>
          <p className="absolute left-1 top-1 flex gap-[5px] bg-white py-[2px]">
            <span className="text-[#0000b0]">余额</span>
            <span>/</span>
            <span className="text-[#00a800]">净值</span>
            <span>/</span>
            <span className="text-[#f00]">控制点(基于最近的小一级时段内的12个控制点的分形插值计算)</span>
          </p>
          <p className="absolute left-1 top-[366px]">手数</p>
        </div>
        <div className="relative flex h-[18px] items-center overflow-hidden">
          <span className="absolute left-[2px]">0</span>
          {trades.map((n) => (
            <span key={n} className="w-10 shrink-0 text-right">{n}</span>
          ))}
        </div>
      </div>
      <div className="w-14 border-l border-[#3c3c3c] pt-[19px]">
        {balances.map((n) => (
          <div key={n} className="flex h-10 items-center gap-1">
            <span className="h-px w-[2px] bg-[#3c3c3c]" />
            {n}
          </div>
        ))}
      </div>
    </div>
  );
}

function Tester() {
  return (
    <section className="flex border-b border-[#a5a5a5] pb-[5px] pr-[5px]">
      <div className="flex w-5 shrink-0 flex-col items-center">
        <button type="button" aria-label="关闭测试" className="flex h-[17px] items-center">
          <svg viewBox="0 0 10 10" className="h-[9px] w-[9px]"><path d="M1 1l8 8M9 1L1 9" stroke="#000" strokeWidth="2" /></svg>
        </button>
        <div className="flex w-4 flex-1 items-end justify-center bg-linear-to-b from-[#b5cfea] to-[#9ab7d6] pb-[2px]">
          <span className="rotate-180 text-sm leading-4 [writing-mode:vertical-rl]">测试</span>
        </div>
      </div>
      <div className="min-w-0 flex-1 border-l border-[#a5a5a5]">
        <EquityChart />
        <div className="flex h-[27px] items-start border-t border-black text-[15px] leading-none text-[#777]" role="tablist">
          <button type="button" role="tab" className="my-1 h-5 w-[58px] border-r border-[#8a8a8a] pb-[2px] pr-1">设置</button>
          <button type="button" role="tab" className="my-1 h-5 w-[54px] pb-[2px]">结果</button>
          <button type="button" role="tab" aria-selected="true" className="-mt-px h-[26px] w-[70px] border-x-2 border-b-2 border-black bg-white text-black">净值图</button>
          <button type="button" role="tab" className="my-1 h-5 w-14 border-r border-[#8a8a8a] pb-[2px]">报告</button>
          <button type="button" role="tab" className="my-1 h-5 w-[55px] border-r border-[#8a8a8a] pb-[2px]">日志</button>
        </div>
      </div>
    </section>
  );
}

function StatusBar() {
  const cell = 'flex h-6 items-center border-l border-[#b5b5b5] pl-[6px]';
  return (
    <footer className="flex h-[30px] items-center text-[15px] leading-6">
      <span className="min-w-0 flex-1 whitespace-nowrap pl-[2px]">寻求帮助,请按F1键</span>
      <span className={clsx(cell, 'w-[156px]')}>Default</span>
      <span className={clsx(cell, 'w-36')}>2021.01.19 09:40</span>
      <span className={clsx(cell, 'w-[98px]')}>O: 1.35967</span>
      <span className={clsx(cell, 'w-[98px]')}>H: 1.35985</span>
      <span className={clsx(cell, 'w-[94px]')}>L: 1.35956</span>
      <span className={clsx(cell, 'w-24')}>C: 1.35964</span>
      <span className={clsx(cell, 'w-[91px]')}>V: 578</span>
      <span className={clsx(cell, 'w-[173px] gap-[5px]')}>
        <svg viewBox="0 0 32 17" className="h-[17px] w-8" shapeRendering="crispEdges" aria-hidden="true">
          {Array.from({ length: 10 }).map((_, i) => (
            <g key={i}>
              <rect x={i * 3.2} width="2.200" height="17" fill="#6c8a1c" />
              <rect x={i * 3.2} y={12 - i} width="2.200" height={5 + i} fill="#1d4470" />
            </g>
          ))}
        </svg>
        967/2 kb
      </span>
    </footer>
  );
}

const apps = [
  {
    name: '远程桌面',
    art: (
      <>
        <path d="M5 25l12-5 8 3-10 7z" fill="#d5d9df" stroke="#a9aeb6" strokeWidth=".6" />
        <path d="M2 1l20 2 2 17L4 21z" fill="#e4e8ee" />
        <path d="M4 2l16 2 2 15-17 1z" fill="#1330d0" />
        <path d="M4 2l8 1 1 17H5z" fill="#4f74ee" />
        <circle cx="22" cy="23" r="6.500" fill="#f2f5f2" stroke="#b8beb8" />
        <path d="M19 21l3 2-3 3M25 20l-3 2 3 3" stroke="#27a243" strokeWidth="1.500" fill="none" />
      </>
    ),
  },
  {
    name: 'A',
    art: (
      <>
        <rect width="30" height="30" rx="1" fill="#0c1c3c" />
        <path d="M5 27L14 3h2l9 24" stroke="#fff" strokeWidth="2.500" fill="none" />
        <path d="M7 19h16" stroke="#f0582c" strokeWidth="2.500" />
      </>
    ),
  },
  {
    name: '记事本',
    art: (
      <>
        <path d="M11 2l15 3 2 2-4 20-18-3z" fill="#f3efe0" stroke="#8f8f7f" />
        <path d="M10 3l14 2-5 20L2 22z" fill="#6cc0d0" />
        <path d="M10 3l14 2-1 4L8 8z" fill="#c5ebf0" />
        <path d="M25 6l3 2-4 20-3-2z" fill="#7a6a35" />
      </>
    ),
  },
  {
    name: 'MetaTrader',
    active: true,
    art: (
      <>
        <rect width="30" height="30" fill="#040404" />
        <path d="M4 22q10 0 23-7-6 5-23 9zM7 20v-4h2v3M11 19v-7h2v6M15 18V9h2v8" fill="#f4f4f4" />
        <path d="M18 6v9M27 7q-5-2-5 3.500t5 4" stroke="#8cc63a" strokeWidth="2" fill="none" />
      </>
    ),
  },
  {
    name: '录屏',
    active: true,
    art: (
      <>
        <path d="M0 0h15v15H0z" fill="#8cc4ee" />
        <path d="M15 0h15v15H15z" fill="#a9dcae" />
        <path d="M0 15h15v15H0z" fill="#f6d3a0" />
        <path d="M15 15h15v15H15z" fill="#e9b5c4" />
        <circle cx="15" cy="15" r="11" fill="#fff" fillOpacity=".35" />
        <path d="M2 1l14 14" stroke="#e04848" strokeWidth="3" />
        <circle cx="15" cy="15" r="4" fill="#ea2c2c" />
        <path d="M17 16v13l3-3 2 4 2-1-2-4h4z" fill="#fff" stroke="#555" />
      </>
    ),
  },
];

function Taskbar() {
  return (
    <div className="relative flex h-[50px] items-stretch bg-[#d6d6e2]">
      <button type="button" aria-label="开始" className="flex w-[60px] items-center justify-center">
        <svg viewBox="0 0 22 22" className="h-[22px] w-[22px]"><path d="M0 4l9-2v9H0zM10 2l12-2v11H10zM0 12h9v8l-9-2zM10 12h12v10l-12-2z" fill="#111" /></svg>
      </button>
      <button type="button" aria-label="搜索" className="flex w-[60px] items-center justify-center">
        <svg viewBox="0 0 22 22" className="h-[22px] w-[22px]" fill="none" stroke="#222" strokeWidth="1.800"><circle cx="14" cy="8" r="6.500" /><path d="M9.500 12.500L1 21" /></svg>
      </button>
      <div className="ml-[3px] flex flex-1">
        {apps.map((app) => (
          <button
            key={app.name}
            type="button"
            aria-label={app.name}
            className="flex w-[62px] flex-col items-center justify-end"
          >
            <svg viewBox="0 0 30 30" className={clsx('relative block h-[30px] w-[30px]', app.active ? '-mb-2' : 'mb-[7px]')}>{app.art}</svg>
            {app.active && <span className="h-[15px] w-[52px] bg-white/50" />}
            <span className="h-[3px] w-[52px] bg-[#1787c9]" />
          </button>
        ))}
      </div>
      <div className="flex items-center pr-[6px]">
        <button type="button" aria-label="显示隐藏的图标" className="px-[7px]">
          <svg viewBox="0 0 18 12" className="h-3 w-[18px]" fill="none" stroke="#222" strokeWidth="2"><path d="M1 11l8-9 8 9" /></svg>
        </button>
        <span className="font-['Noto_Sans_CJK_SC',sans-serif] text-base font-bold leading-none">中</span>
        <div className="ml-[15px] flex w-[84px] flex-col items-center gap-2 self-stretch pt-[5px] text-[15px] leading-none text-[#222]">
          <time>下午 02:23</time>
          <time className="self-start">2021-0</time>
        </div>
        <button type="button" aria-label="通知" className="ml-6 self-start pt-[15px]">
          <svg viewBox="0 0 22 20" className="h-5 w-[22px]"><path d="M1 0h20v16h-8l-4 4v-4H1z" fill="#111" /><path d="M4 5h14M4 9h14" stroke="#d6d6e2" strokeWidth="1.500" /></svg>
        </button>
        <span className="ml-6 self-stretch border-l border-[#b4b4c0]" />
      </div>
      <div className="absolute bottom-0 right-0 flex h-[26px] w-[110px] items-center bg-[#ff7e1c] pl-[2px]">
        <Brand large />
      </div>
    </div>
  );
}

export default function App() {
  return (
    <div className="flex min-h-screen flex-col overflow-x-hidden bg-[#f0f0f0] font-['Open_Sans','Noto_Sans_CJK_SC',sans-serif] text-black">
      <TitleBar />
      <MenuBar />
      <Toolbars />
      <main className="flex-1">
        <PriceChart />
        <ChartTabs />
        <Tester />
      </main>
      <StatusBar />
      <Taskbar />
    </div>
  );
}
